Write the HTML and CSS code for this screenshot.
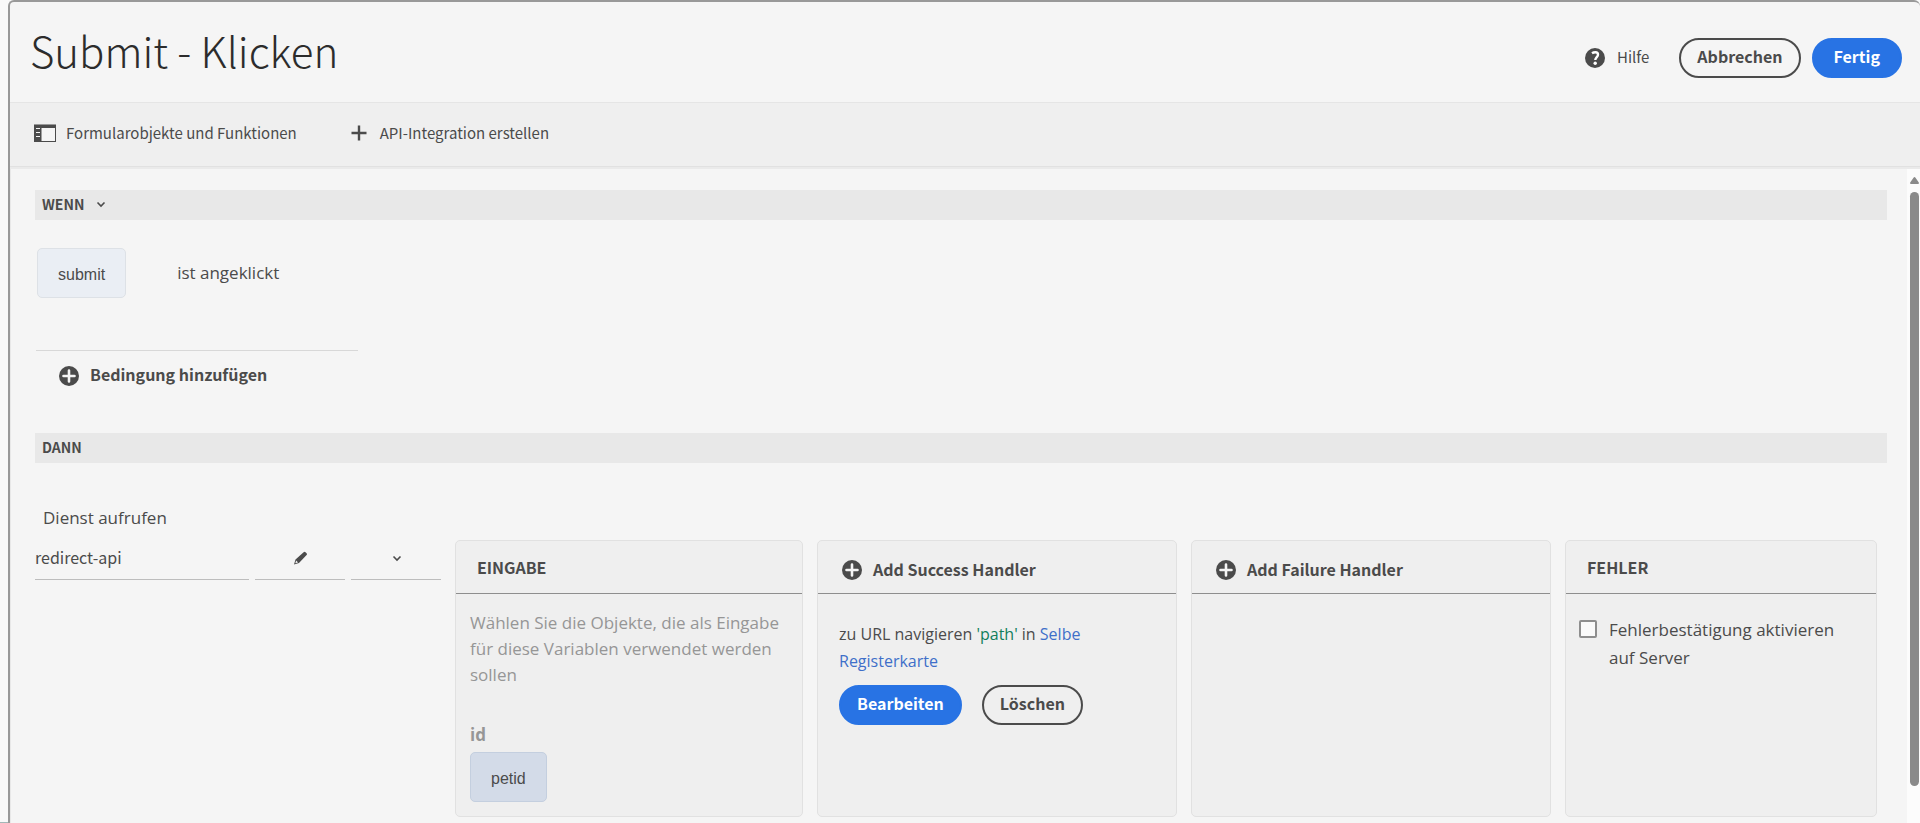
FILE: index.html
```html
<!DOCTYPE html>
<html lang="de">
<head>
<meta charset="utf-8">
<title>Submit - Klicken</title>
<link rel="stylesheet" href="styles.css">
</head>
<body>
<svg class="sprite" aria-hidden="true">
  <symbol id="plus-circle" viewBox="0 0 20 20"><circle cx="10" cy="10" r="10" fill="currentColor"/><path d="M10 4.500v11M4.500 10h11" stroke="#f5f5f5" stroke-width="2.600" stroke-linecap="round"/></symbol>
  <symbol id="chevron" viewBox="0 0 10 10"><path d="M1.500 3.500L5 7L8.500 3.500" fill="none" stroke="currentColor" stroke-width="1.600"/></symbol>
</svg>
<div class="app">
  <div class="gutter"></div>
  <div class="window">
    <header class="header">
      <h1 class="title">Submit - Klicken</h1>
      <div class="actions">
        <button class="help" type="button">
          <svg width="20" height="20" viewBox="0 0 20 20" aria-hidden="true"><circle cx="10" cy="10" r="10" fill="currentColor"/><path d="M7 5.200C8.200 4.400 9.400 4.300 10.500 4.300C12.300 4.300 13 5.500 13 6.700C13 8.900 10.300 9.300 10.300 12" fill="none" stroke="#fff" stroke-width="2.400"/><circle cx="10.200" cy="15.200" r="1.700" fill="#fff"/></svg>
          <span>Hilfe</span>
        </button>
        <button class="btn btn-outline" type="button">Abbrechen</button>
        <button class="btn btn-primary" type="button">Fertig</button>
      </div>
    </header>
    <div class="toolbar">
      <button class="tool" type="button">
        <svg width="22" height="18" viewBox="0 0 22 18" aria-hidden="true"><path d="M0 0H22V18H0Z" fill="currentColor"/><path d="M0 .5H22" stroke="#999"/><path d="M7.500 4H21V17H7.500Z" fill="#f5f5f5"/><path d="M2 4.500H6M2 8.500H6M2 12.500H6" stroke="#f5f5f5"/></svg>
        <span>Formularobjekte und Funktionen</span>
      </button>
      <button class="tool" type="button">
        <svg width="16" height="16" viewBox="0 0 16 16" aria-hidden="true"><path d="M8 .5v15M.5 8h15" stroke="currentColor" stroke-width="2.400"/></svg>
        <span>API-Integration erstellen</span>
      </button>
    </div>
    <div class="body">
      <main class="content">
        <h2 class="section-bar">WENN <svg class="chevron" aria-hidden="true"><use href="#chevron"/></svg></h2>
        <div class="condition">
          <span class="chip">submit</span>
          <span>ist angeklickt</span>
        </div>
        <div class="add-row">
          <button class="add" type="button"><svg class="plus" aria-hidden="true"><use href="#plus-circle"/></svg><span>Bedingung hinzufügen</span></button>
        </div>
        <h2 class="section-bar">DANN</h2>
        <label class="statement" for="service">Dienst aufrufen</label>
        <div class="invoke">
          <div class="service">
            <input class="field" id="service" type="text" value="redirect-api">
            <button class="field-btn" type="button" aria-label="Bearbeiten"><svg width="14" height="14" viewBox="0 0 14 14" aria-hidden="true"><path d="M1.500 8.500L9.600 1.300Q10.600 .4 11.500 1.200L12.600 2.300Q13.500 3.200 12.600 4.100L5 12L0 13.500Z" fill="currentColor"/><path d="M2.200 9.600L4 11.400L1.300 12.300Z" fill="#f5f5f5"/></svg></button>
            <button class="field-btn" type="button" aria-label="Auswählen"><svg class="chevron" aria-hidden="true"><use href="#chevron"/></svg></button>
          </div>
          <section class="panel">
            <h3 class="panel-head">EINGABE</h3>
            <div class="inputs">
              <p class="hint">Wählen Sie die Objekte, die als Eingabe für diese Variablen verwendet werden sollen</p>
              <p class="param">id</p>
              <span class="chip chip-blue">petid</span>
            </div>
          </section>
          <section class="panel">
            <div class="panel-head"><button class="add" type="button"><svg class="plus" aria-hidden="true"><use href="#plus-circle"/></svg><span>Add Success Handler</span></button></div>
            <div class="handler">
              <p class="summary"><span>zu URL navigieren</span> <span class="value">'path'</span> <span>in</span> <span class="target">Selbe</span> <span class="target">Registerkarte</span></p>
              <div class="handler-actions">
                <button class="btn btn-primary" type="button">Bearbeiten</button>
                <button class="btn btn-outline" type="button">Löschen</button>
              </div>
            </div>
          </section>
          <section class="panel">
            <div class="panel-head"><button class="add" type="button"><svg class="plus" aria-hidden="true"><use href="#plus-circle"/></svg><span>Add Failure Handler</span></button></div>
          </section>
          <section class="panel">
            <h3 class="panel-head">FEHLER</h3>
            <label class="check"><input class="check-box" type="checkbox"><span>Fehlerbestätigung aktivieren auf Server</span></label>
          </section>
        </div>
      </main>
      <div class="scrollbar" aria-hidden="true">
        <svg width="9" height="7" viewBox="0 0 9 7"><path d="M4.500 0Q5 0 5.500 .8L8.800 5.500Q9.300 7 8 7H1Q-.3 7 .2 5.500L3.500 .8Q4 0 4.500 0Z" fill="#8a8a8a"/></svg>
        <div class="thumb"></div>
      </div>
    </div>
  </div>
</div>
</body>
</html>
```
FILE: styles.css
```css
* { box-sizing: border-box; }
body { margin: 0; background: #f5f5f5; color: #4b4b4b; font-family: "Open Sans", "Noto Sans", sans-serif; font-size: 17px; line-height: 26px; }
h1, h2, h3, p { margin: 0; }
button { margin: 0; padding: 0; border: 0; background: none; color: inherit; font: inherit; }
svg { flex: none; }
.sprite { position: absolute; width: 0; height: 0; }
.app { display: flex; height: 100vh; overflow: hidden; background: #f9f9f9; }
.gutter { flex: 0 0 8px; border-bottom: 1px solid #a3b8b8; }
.window { flex: 1; display: flex; flex-direction: column; min-width: 0; border: 2px solid #999; border-width: 2px 0 0 2px; border-radius: 6px 6px 0 0; background: #f5f5f5; }
.header { display: flex; align-items: center; justify-content: space-between; height: 101px; padding: 0 18px 0 20px; border-bottom: 1px solid #e5e5e5; }
.title { padding-bottom: 4px; color: #2c2c2c; font: 300 42px/60px "Noto Sans CJK SC", sans-serif; }
.actions { display: flex; align-items: center; padding-top: 12px; font-family: "Noto Sans CJK SC", sans-serif; }
.help { display: flex; align-items: center; gap: 12px; margin-right: 30px; font-size: 15px; }
.help span, .add span { padding-bottom: 3px; }
.tool span { padding-bottom: 1px; }
.btn { height: 40px; padding: 0 16px 4px; border: 2px solid #4b4b4b; border-radius: 20px; font: 700 16px/32px "Noto Sans CJK SC", sans-serif; }
.btn-primary { border-color: #2873e4; background: #2873e4; color: #fff; }
.actions .btn-primary { margin-left: 11px; padding: 0 20px 4px; }
.toolbar { display: flex; align-items: center; gap: 54px; height: 64px; padding: 0 24px 3px; border-bottom: 1px solid #e1e1e1; background: #efefef; box-shadow: 0 2px 0 #eaeaea; }
.tool { display: flex; align-items: center; gap: 10px; font: 15px/24px "Noto Sans CJK SC", sans-serif; }
.tool + .tool { gap: 13px; }
.body { flex: 1; display: flex; min-height: 0; margin-top: 2px; }
.content { flex: 1; min-width: 0; padding: 21px 20px 5px 24px; border-left: 1px solid #e8e8e8; overflow: hidden; }
.section-bar { display: flex; align-items: center; gap: 12px; height: 30px; padding: 0 8px 2px 7px; background: #e8e8e8; font: 700 14px/28px "Noto Sans CJK SC", sans-serif; }
.chevron { width: 10px; height: 10px; }
.condition { display: flex; align-items: center; gap: 51px; padding: 28px 2px 52px; }
.chip { display: inline-flex; align-items: center; height: 50px; padding: 3px 20px 0; border: 1px solid #dde1e6; border-radius: 5px; background: #eaeef4; font: 16px/24px "Liberation Sans", Arial, sans-serif; }
.chip-blue { border-color: #c4cfdf; background: #d3dbe8; }
.add-row { width: 322px; margin: 0 0 45px 1px; padding: 12px 23px 0; border-top: 1px solid #d8d8d8; }
.add { display: flex; align-items: center; gap: 11px; font: 700 16px/22px "Noto Sans CJK SC", sans-serif; }
.plus { width: 20px; height: 20px; }
.statement { display: block; padding: 42px 8px 9px; }
.invoke { display: grid; grid-template-columns: 406px 348fr 360fr 360fr 312fr; gap: 14px; padding-right: 10px; }
.service { display: grid; grid-template-columns: 214px 90px 90px; gap: 6px; align-self: start; }
.field, .field-btn { height: 40px; border: 0; border-bottom: 1px solid #bdbdbd; border-radius: 0; background: none; color: inherit; }
.field { width: 100%; padding: 0 0 6px; font: 16px/24px "Noto Sans CJK SC", sans-serif; }
.field-btn { display: flex; align-items: center; justify-content: center; padding: 0 0 4px 1px; }
.panel { min-height: 277px; border: 1px solid #e1e1e1; border-radius: 5px; background: #efefef; }
.panel-head { display: flex; align-items: center; height: 53px; padding: 0 21px; border-bottom: 1px solid #8e8e8e; font: 700 16px/24px "Noto Sans CJK SC", sans-serif; }
.panel-head .add { padding: 6px 3px 0; }
.inputs { display: flex; flex-direction: column; align-items: flex-start; padding: 16px 14px 14px; }
.hint { color: #969696; }
.param { padding: 34px 0 4px; color: #969696; font-weight: 700; }
.handler { padding: 27px 21px; }
.summary { width: 260px; font-size: 16px; line-height: 27px; }
.value { color: #12805c; }
.target { color: #3f6fc9; }
.handler-actions { display: flex; gap: 20px; padding-top: 10px; }
.check { display: flex; gap: 12px; padding: 22px 13px; line-height: 28px; }
.check-box { appearance: none; flex: none; width: 18px; height: 18px; margin: 4px 0 0; border: 2px solid #8e8e8e; border-radius: 2px; background: #fafafa; }
.scrollbar { flex: 0 0 13px; display: flex; flex-direction: column; align-items: center; gap: 8px; padding: 8px 0 37px 2px; background: #fcfcfc; }
.thumb { flex: 1; width: 9px; border-radius: 5px; background: #8a8a8a; }
```
